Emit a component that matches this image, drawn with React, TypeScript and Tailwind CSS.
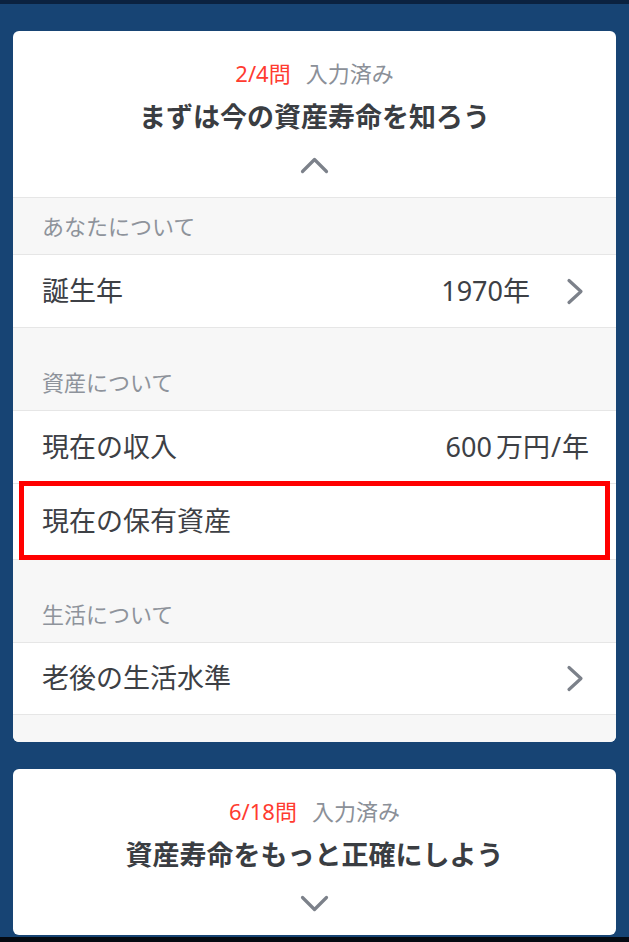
import React from "react";

const font = { fontFamily: '"Noto Sans", "Noto Sans CJK JP", sans-serif' };

function ChevronRight() {
  return (
    <svg width="18" height="27" viewBox="0 0 18 27" fill="none" className="shrink-0">
      <polyline points="3,2.5 15,13.5 3,24.5" stroke="#7c818a" strokeWidth="3.2" strokeLinecap="round" strokeLinejoin="round" />
    </svg>
  );
}

function ChevronVertical({ up }: { up: boolean }) {
  return (
    <svg width="29" height="17" viewBox="0 0 29 17" fill="none">
      <polyline
        points={up ? "2.5,14.5 14.5,2.5 26.5,14.5" : "2.5,2.5 14.5,14.5 26.5,2.5"}
        stroke="#7c818a"
        strokeWidth="3.2"
        strokeLinecap="round"
        strokeLinejoin="round"
      />
    </svg>
  );
}

function CardHeader({ done, total, title, open }: { done: number; total: number; title: string; open: boolean }) {
  return (
    <div className="flex flex-col items-center pt-[27px] pb-[23px] h-[166px]">
      <div className="flex items-baseline h-[30px] leading-[30px] text-[22px]">
        <span className="text-[#ff3b30]">
          {done}/{total}問
        </span>
        <span className="ml-[15px] text-[#8b9098]">入力済み</span>
      </div>
      <div className="mt-[11px] h-[36px] leading-[36px] text-[27px] font-bold text-[#3a3d42]">{title}</div>
      <div className="mt-[22px]">
        <ChevronVertical up={open} />
      </div>
    </div>
  );
}

function SectionLabel({ children, height }: { children: React.ReactNode; height: string }) {
  return (
    <div className={`flex items-end bg-[#f7f7f7] border-t border-[#e6e6e6] pl-[29px] pb-[17px] ${height}`}>
      <span className="text-[22px] leading-[22px] text-[#8e939b]">{children}</span>
    </div>
  );
}

function Row({ label, children, last, tall }: { label: string; children?: React.ReactNode; last?: boolean; tall?: boolean }) {
  return (
    <div
      className={`flex items-center bg-white border-t border-[#e6e6e6] pl-[29px] pr-[27px] ${tall ? "h-[76px]" : "h-[73px]"} ${last ? "border-b" : ""}`}
    >
      <span className="text-[27px] text-[#3d4045]">{label}</span>
      <div className="ml-auto flex items-center text-[27px] text-[#3d4045]">{children}</div>
    </div>
  );
}

export default function App() {
  return (
    <div style={font} className="w-[629px] h-[942px] overflow-hidden flex flex-col bg-[#174474]">
      <div className="h-[4px] bg-[#0b2240]" />

      <div className="mx-[13px] mt-[27px] rounded-[6px] bg-white overflow-hidden">
        <CardHeader done={2} total={4} title="まずは今の資産寿命を知ろう" open />

        <SectionLabel height="h-[57px]">あなたについて</SectionLabel>
        <Row label="誕生年">
          <span>1970年</span>
          <span className="ml-[36px] mr-[5px]">
            <ChevronRight />
          </span>
        </Row>

        <SectionLabel height="h-[83px]">資産について</SectionLabel>
        <Row label="現在の収入">
          <span>600</span>
          <span className="ml-[4px]">万円</span>
          <span className="ml-[1px]">/</span>
          <span className="ml-[1px]">年</span>
        </Row>
        <div className="relative">
          <Row label="現在の保有資産" tall />
          <div className="absolute left-[6px] right-[6px] top-[-2px] bottom-[-1px] border-[5px] border-[#ff0000] pointer-events-none" />
        </div>

        <SectionLabel height="h-[83px]">生活について</SectionLabel>
        <Row label="老後の生活水準" last>
          <span className="mr-[5px]">
            <ChevronRight />
          </span>
        </Row>
        <div className="h-[27px] bg-[#f7f7f7]" />
      </div>

      <div className="mx-[13px] mt-[27px] rounded-[6px] bg-white overflow-hidden">
        <CardHeader done={6} total={18} title="資産寿命をもっと正確にしよう" open={false} />
      </div>

      <div className="mt-[2px] flex-1 bg-[#050a12]" />
    </div>
  );
}
